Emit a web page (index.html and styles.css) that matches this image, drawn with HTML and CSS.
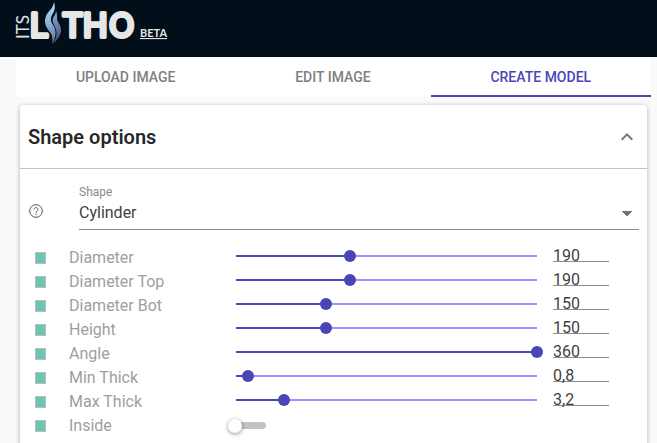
FILE: index.html
```html
<!DOCTYPE html>
<html lang="en">
<head>
    <meta charset="UTF-8">
    <meta name="viewport" content="width=device-width, initial-scale=1.0">
    <title>ItsLitho - Create model</title>
    <link rel="stylesheet" href="styles.css">
</head>
<body>
    <header class="top-bar">
        <a href="/" class="logo" aria-label="ItsLitho beta">
            <svg width="168" height="48" viewBox="-8 0 168 48">
                <defs>
                    <linearGradient id="flame" x1="0" y1="0" x2="0" y2="1">
                        <stop offset="0" stop-color="#b5dcf8"/>
                        <stop offset="0.5" stop-color="#8db4dc"/>
                        <stop offset="1" stop-color="#5f6c92"/>
                    </linearGradient>
                    <linearGradient id="flame-dark" x1="0" y1="0" x2="0" y2="1">
                        <stop offset="0" stop-color="#8db4dc"/>
                        <stop offset="1" stop-color="#3e4064"/>
                    </linearGradient>
                </defs>
                <text class="logo-its" transform="translate(13 39) rotate(-90)">ITS</text>
                <text class="logo-main" y="37" x="14 46 67 93">LTHO</text>
                <path fill="url(#flame)" d="M38 2c2 6 0 10-2 13-2 4-1 7 1 10 4 6 3 12-1 19 1-6 0-10-3-13-4-5-5-10-3-15 2-5 7-7 8-14z"/>
                <path fill="url(#flame-dark)" d="M40 11c2 5 0 8 2 11 5 7 4 14-5 22 3-6 5-11 2-17-2-4-3-6-2-9 1-2 3-4 3-7z"/>
                <text class="logo-beta" x="124" y="37">BETA</text>
            </svg>
        </a>
    </header>

    <main class="content">
        <nav class="tabs">
            <a href="#upload" class="tab">Upload image</a>
            <a href="#edit" class="tab">Edit image</a>
            <a href="#model" class="tab active" aria-current="page">Create model</a>
        </nav>

        <section class="card">
            <div class="card-header">
                <h2>Shape options</h2>
                <button type="button" class="icon-button" aria-label="Collapse">
                    <svg width="24" height="24" viewBox="0 0 24 24"><path fill="#757575" d="M12 8l-6 6 1.41 1.41L12 10.83l4.59 4.58L18 14z"/></svg>
                </button>
            </div>

            <div class="card-body">
                <!-- Shape selector -->
                <div class="shape-row">
                    <button type="button" class="icon-button" aria-label="Help">
                        <svg width="16" height="16" viewBox="0 0 16 16" fill="none" stroke="#555"><circle cx="8" cy="8" r="6.3"/><path d="M6 6.500C6 4 10 4 10 6.500C10 8 8 8 8 9.800M8 10.800v1.200"/></svg>
                    </button>
                    <div class="field">
                        <label for="shape">Shape</label>
                        <select id="shape">
                            <option>Cylinder</option>
                        </select>
                    </div>
                </div>

                <!-- Parameters -->
                <div class="params">
                    <div class="param">
                        <span class="marker"></span>
                        <label for="diameter">Diameter</label>
                        <input type="range" id="diameter" min="0" max="500" value="190" style="--fill: 0.38">
                        <input type="text" class="value" aria-label="Diameter value" value="190">
                    </div>
                    <div class="param">
                        <span class="marker"></span>
                        <label for="diameter-top">Diameter Top</label>
                        <input type="range" id="diameter-top" min="0" max="500" value="190" style="--fill: 0.38">
                        <input type="text" class="value" aria-label="Diameter Top value" value="190">
                    </div>
                    <div class="param">
                        <span class="marker"></span>
                        <label for="diameter-bot">Diameter Bot</label>
                        <input type="range" id="diameter-bot" min="0" max="500" value="150" style="--fill: 0.3">
                        <input type="text" class="value" aria-label="Diameter Bot value" value="150">
                    </div>
                    <div class="param">
                        <span class="marker"></span>
                        <label for="height">Height</label>
                        <input type="range" id="height" min="0" max="500" value="150" style="--fill: 0.3">
                        <input type="text" class="value" aria-label="Height value" value="150">
                    </div>
                    <div class="param">
                        <span class="marker"></span>
                        <label for="angle">Angle</label>
                        <input type="range" id="angle" min="0" max="360" value="360" style="--fill: 1">
                        <input type="text" class="value" aria-label="Angle value" value="360">
                    </div>
                    <div class="param">
                        <span class="marker"></span>
                        <label for="min-thick">Min Thick</label>
                        <input type="range" id="min-thick" min="0" max="20" step="0.1" value="0.8" style="--fill: 0.04">
                        <input type="text" class="value" aria-label="Min Thick value" value="0,8">
                    </div>
                    <div class="param">
                        <span class="marker"></span>
                        <label for="max-thick">Max Thick</label>
                        <input type="range" id="max-thick" min="0" max="20" step="0.1" value="3.2" style="--fill: 0.16">
                        <input type="text" class="value" aria-label="Max Thick value" value="3,2">
                    </div>
                    <div class="param">
                        <span class="marker"></span>
                        <label for="inside">Inside</label>
                        <input type="checkbox" id="inside" class="switch" role="switch">
                    </div>
                </div>
            </div>
        </section>
    </main>
</body>
</html>
```

FILE: styles.css
```css
* {
    box-sizing: border-box;
}
body {
    margin: 0;
    font-family: Roboto, "Liberation Sans", sans-serif;
    font-size: 16px;
    line-height: 24px;
    background: #fafafa;
    color: rgba(0, 0, 0, 0.87);
    overflow: hidden;
}
.top-bar {
    height: 57px;
    padding: 0 8px;
    background: #020f1a;
}
.logo svg {
    display: block;
}
.logo-its {
    font-family: Lato, sans-serif;
    font-size: 17px;
    fill: #e4e4e4;
}
.logo-main {
    font-family: Inter, sans-serif;
    font-size: 33px;
    font-weight: 400;
    fill: #e6e6e6;
    stroke: #e6e6e6;
    stroke-width: 4px;
    stroke-linejoin: round;
}
.logo-beta {
    font-family: Lato, sans-serif;
    font-size: 11px;
    font-weight: 700;
    fill: #e4e4e4;
    text-decoration: underline;
}
.content {
    padding: 0 6px 0 16px;
}
.tabs {
    display: flex;
    background: #fff;
}
.tab {
    flex: 1 1 auto;
    height: 40px;
    line-height: 40px;
    text-align: center;
    text-transform: uppercase;
    text-decoration: none;
    font-size: 14px;
    font-weight: 500;
    color: #7f7f7f;
}
.tab.active {
    color: #4a46b5;
    border-bottom: 2px solid #4a46b5;
}
.card {
    margin: 8px 4px;
    background: #fff;
    border-radius: 4px;
    box-shadow: 0 1px 5px rgba(0, 0, 0, 0.3);
}
.card-header {
    display: flex;
    align-items: center;
    justify-content: space-between;
    height: 64px;
    padding: 0 8px;
    border-bottom: 1px solid #c4c4c4;
}
h2 {
    margin: 0;
    font-size: 20px;
    font-weight: 600;
}
.icon-button {
    display: flex;
    padding: 0;
    border: none;
    background: none;
    cursor: pointer;
}
.card-body {
    padding: 15px 8px;
}
.shape-row {
    display: flex;
    align-items: flex-end;
    gap: 35px;
}
.shape-row .icon-button {
    padding-bottom: 11px;
}
.field {
    flex: 1;
    display: flex;
    flex-direction: column;
}
.field label {
    font-size: 12px;
    line-height: 16px;
    color: #8a8a8a;
}
.field select {
    appearance: none;
    height: 30px;
    padding: 0 0 4px;
    border: none;
    border-bottom: 1px solid #8c8c8c;
    border-radius: 0;
    font: inherit;
    color: #424242;
    background: conic-gradient(from -45deg at 50% 100%, #757575 90deg, transparent 0) no-repeat right 7px top 11px / 10px 5px;
}
.params {
    padding: 16px 30px 0 7px;
}
.param {
    display: grid;
    grid-template-columns: 11px 164px 1fr 56px;
    column-gap: 10px;
    height: 24px;
}
.param label {
    padding-left: 13px;
    color: #9e9e9e;
}
.marker {
    height: 12px;
    margin-top: 6px;
    background: #6cc5b1;
    border: 1px solid #bdbdbd;
}
input[type="range"] {
    appearance: none;
    width: 100%;
    height: 20px;
    margin: 0;
    background: none;
}
input[type="range"]::-webkit-slider-runnable-track {
    height: 12px;
    background:
        linear-gradient(#4a46b5, #4a46b5) no-repeat 6px 5px / calc((100% - 12px) * var(--fill)) 2px,
        linear-gradient(#9f8fff, #9f8fff) no-repeat 6px 5px / calc(100% - 12px) 2px;
}
input[type="range"]::-webkit-slider-thumb {
    appearance: none;
    width: 12px;
    height: 12px;
    border-radius: 50%;
    background: #4a46b5;
}
.value {
    width: 100%;
    height: 20px;
    padding: 0;
    border: none;
    font: inherit;
    line-height: 20px;
    color: #424242;
    background: linear-gradient(#8c8c8c, #8c8c8c) no-repeat 0 15px / 100% 1px;
}
.switch {
    appearance: none;
    display: flex;
    align-items: center;
    position: relative;
    z-index: 0;
    width: 38px;
    height: 14px;
    margin: 5px 0 0 -2px;
}
.switch::before {
    content: "";
    width: 14px;
    height: 14px;
    border-radius: 50%;
    background: #fff;
    box-shadow: 0 1px 4px rgba(0, 0, 0, 0.45);
}
/* switch track */
.switch::after {
    content: "";
    position: absolute;
    z-index: -1;
    left: 6px;
    right: 0;
    top: 3px;
    height: 7px;
    border-radius: 4px;
    background: #c2c2c2;
}
```
